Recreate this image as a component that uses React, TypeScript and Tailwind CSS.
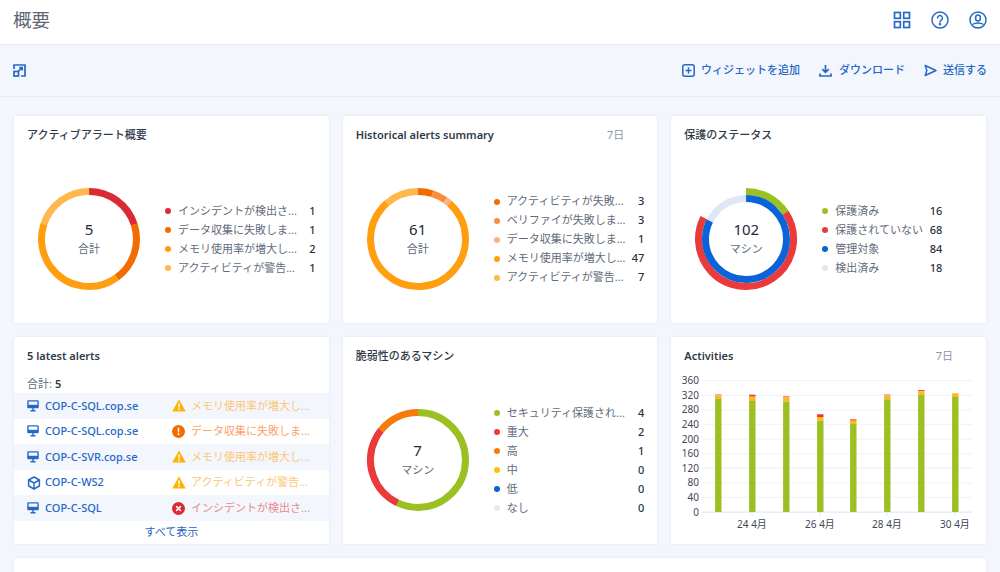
import React from "react";

const blue = "#2668c5";

type Seg = { color: string; from: number; to: number };

function arc(r: number, seg: Seg, width: number) {
  const c = 2 * Math.PI * r;
  const len = ((seg.to - seg.from) / 360) * c;
  return (
    <circle
      key={`${r}-${seg.from}`}
      cx="60"
      cy="60"
      r={r}
      fill="none"
      stroke={seg.color}
      strokeWidth={width}
      strokeDasharray={`${len} ${c - len}`}
      transform={`rotate(${seg.from - 90} 60 60)`}
    />
  );
}

function Donut({
  outer,
  inner,
  value,
  label,
}: {
  outer: Seg[];
  inner?: Seg[];
  value: string;
  label: string;
}) {
  return (
    <div className="relative mr-[16px] h-[120px] w-[120px] shrink-0">
      <svg width="120" height="120" viewBox="0 0 120 120">
        {outer.map((s) => arc(47.5, s, 7))}
        {inner && inner.map((s) => arc(40.5, s, 7))}
      </svg>
      <div className="absolute inset-0 flex flex-col items-center justify-center">
        <div className="text-[15px] leading-[20px] text-[#1f2a3a]">{value}</div>
        <div className="mt-[1px] text-[11px] leading-[18px] text-[#5f6b7a]">{label}</div>
      </div>
    </div>
  );
}

function Legend({ rows }: { rows: { color: string; text: string; n: number }[] }) {
  return (
    <div className="flex-1 pt-[2px]">
      {rows.map((r) => (
        <div key={r.text} className="flex h-[19px] items-center text-[11px]">
          <span className="h-[6px] w-[6px] shrink-0 rounded-full" style={{ background: r.color }} />
          <span className="ml-[7px] flex-1 whitespace-nowrap text-[#5f6b7a]">{r.text}</span>
          <span className="text-[11px] font-medium text-[#2a3442]">{r.n}</span>
        </div>
      ))}
    </div>
  );
}

function Card({
  title,
  range,
  latin,
  children,
}: {
  title: string;
  range?: string;
  latin?: boolean;
  children: React.ReactNode;
}) {
  return (
    <section className="flex h-[207px] flex-col rounded-[2px] bg-white shadow-[0_0_2px_rgba(38,104,197,0.15)]">
      <div className="flex h-[38px] items-center justify-between pl-[13px] pr-[33px] text-[11px] text-[#2f3a48]">
        <span className={latin ? "font-semibold" : "font-medium"}>{title}</span>
        {range && <span className="text-[11px] font-normal text-[#8d96a3]">{range}</span>}
      </div>
      {children}
    </section>
  );
}

function DonutBody({ children }: { children: React.ReactNode }) {
  return <div className="flex flex-1 items-center pl-[15px] pr-[13px]">{children}</div>;
}

function Pc() {
  return (
    <svg width="12" height="12" viewBox="0 0 13 13" fill="none" stroke={blue} strokeWidth="1.5">
      <rect x="1" y="1" width="11" height="7.2" rx="0.6" />
      <path d="M1 6.6h11" strokeWidth="2.8" />
      <path d="M6.5 8v3M3.8 11.6h5.4" />
    </svg>
  );
}

function Box() {
  return (
    <svg width="14" height="14" viewBox="0 0 14 14" fill="none" stroke={blue} strokeWidth="1.5" strokeLinejoin="round">
      <path d="M7 1l5.4 3v6L7 13l-5.4-3V4z" />
      <path d="M1.6 4L7 7l5.4-3M7 7v6" />
    </svg>
  );
}

function Warn() {
  return (
    <svg width="14" height="13" viewBox="0 0 14 13">
      <path d="M7 .6L13.8 12.6H.2z" fill="#ffb300" />
      <path d="M6.2 4.6h1.6l-.2 4.2H6.4zM6.2 9.6h1.6v1.5H6.2z" fill="#fff" />
    </svg>
  );
}

function Err() {
  return (
    <svg width="13" height="13" viewBox="0 0 13 13">
      <circle cx="6.5" cy="6.5" r="6.5" fill="#f36c00" />
      <path d="M5.7 2.8h1.6l-.2 4.6H5.9zM5.7 8.3h1.6v1.6H5.7z" fill="#fff" />
    </svg>
  );
}

function Crit() {
  return (
    <svg width="13" height="13" viewBox="0 0 13 13">
      <circle cx="6.5" cy="6.5" r="6.5" fill="#d92a35" />
      <path d="M4.6 4.6l3.8 3.8M8.4 4.6l-3.8 3.8" stroke="#fff" strokeWidth="1.5" strokeLinecap="round" />
    </svg>
  );
}

const alerts = [
  { name: "COP-C-SQL.cop.se", dev: <Pc />, icon: <Warn />, text: "メモリ使用率が増大し...", color: "#fcc675", bg: "bg-[#f3f6fc]" },
  { name: "COP-C-SQL.cop.se", dev: <Pc />, icon: <Err />, text: "データ収集に失敗しま...", color: "#fba26a", bg: "bg-white" },
  { name: "COP-C-SVR.cop.se", dev: <Pc />, icon: <Warn />, text: "メモリ使用率が増大し...", color: "#fcc675", bg: "bg-[#f3f6fc]" },
  { name: "COP-C-WS2", dev: <Box />, icon: <Warn />, text: "アクティビティが警告...", color: "#fcc675", bg: "bg-white" },
  { name: "COP-C-SQL", dev: <Pc />, icon: <Crit />, text: "インシデントが検出さ...", color: "#ea8a90", bg: "bg-[#f3f6fc]" },
];

// [x, green top, yellow top, cap top, cap colour]
const bars: [number, number, number, number, string][] = [
  [719.3, 398.7, 395.7, 394, "#f7a6a6"],
  [753.3, 401, 396.7, 394.7, "#e8403f"],
  [787.3, 401.7, 397.7, 396, "#f28a80"],
  [821.3, 420.7, 417, 414.3, "#e8353a"],
  [854.3, 424, 421, 419, "#f58a4a"],
  [888.3, 399.3, 395.7, 394, "#f7a6a6"],
  [922.3, 394.7, 391.3, 390, "#e8504a"],
  [956.3, 397, 393.3, 393.3, "#ffb300"],
];

const ticks = [360, 320, 280, 240, 200, 160, 120, 80, 40, 0];
const dates: [number, string][] = [
  [753, "24 4月"],
  [821, "26 4月"],
  [888, "28 4月"],
  [956, "30 4月"],
];

function ActivityChart() {
  return (
    <svg width="314" height="175" viewBox="672 369 314 175" className="-mt-[6px] block">
      {ticks.map((t, i) => {
        const y = 380.7 + i * 14.59;
        return (
          <g key={t}>
            <line x1="703" x2="973" y1={y} y2={y} stroke="#f1f4fa" strokeWidth="1.3" />
            <text x="700" y={y + 3.6} textAnchor="end" fontSize="10" fill="#3f4854">
              {t}
            </text>
          </g>
        );
      })}
      <line x1="703" x2="973" y1="512.3" y2="512.3" stroke="#e6ecf6" strokeWidth="1" />
      {bars.map(([x, g, yl, cap, c]) => (
        <g key={x}>
          <rect x={x - 3.2} y={cap} width="6.4" height={yl - cap} fill={c} />
          <rect x={x - 3.2} y={yl} width="6.4" height={g - yl} fill="#ffb71b" />
          <rect x={x - 3.2} y={g} width="6.4" height={512 - g} fill="#9ac121" />
        </g>
      ))}
      {dates.map(([x, s]) => (
        <g key={s}>
          <line x1={x} x2={x} y1="512" y2="516" stroke="#dfe6f2" />
          <text x={x} y="528" textAnchor="middle" fontSize="10" fill="#3f4854">
            {s}
          </text>
        </g>
      ))}
    </svg>
  );
}

export default function App() {
  return (
    <div className="h-[572px] w-[1000px] overflow-hidden bg-[#f3f6fc] font-['Noto_Sans','Noto_Sans_CJK_JP',sans-serif]">
      {/* Header */}
      <header className="flex h-[45px] items-center justify-between border-b border-[#e6ecf6] bg-white px-[13px] pb-[4px]">
        <h1 className="text-[18.5px] font-normal text-[#5f6773]">概要</h1>
        <div className="flex items-center gap-[20px]">
          <svg width="18" height="18" viewBox="0 0 18 18" fill="none" stroke={blue} strokeWidth="1.7">
            <rect x="1.5" y="1.5" width="5.8" height="5.8" />
            <rect x="10.7" y="1.5" width="5.8" height="5.8" />
            <rect x="1.5" y="10.7" width="5.8" height="5.8" />
            <rect x="10.7" y="10.7" width="5.8" height="5.8" />
          </svg>
          <svg width="18" height="18" viewBox="0 0 18 18" fill="none" stroke={blue} strokeWidth="1.5">
            <circle cx="9" cy="9" r="8" />
            <path d="M6.6 7a2.4 2.4 0 1 1 3.6 2.1c-.8.5-1.2 1-1.2 2" strokeLinecap="round" />
            <circle cx="9" cy="13.3" r="0.5" fill={blue} />
          </svg>
          <svg width="18" height="18" viewBox="0 0 18 18" fill="none" stroke={blue} strokeWidth="1.5">
            <circle cx="9" cy="9" r="8" />
            <ellipse cx="9" cy="7" rx="2.4" ry="3" />
            <path d="M3.5 13.5c1.5-1 3.4-1.4 5.5-1.4s4 .4 5.5 1.4" />
          </svg>
        </div>
      </header>

      {/* Toolbar */}
      <div className="flex h-[52px] items-center justify-between border-b border-[#e6ecf6] px-[13px]">
        <svg width="13" height="13" viewBox="0 0 13 13" fill="none" stroke={blue} strokeWidth="1.7">
          <path d="M1 5V1h11v11H8" />
          <rect x="1" y="7.5" width="4.5" height="4.5" />
          <path d="M5 7.5L9 3.8M6.2 3.6h3v3" />
        </svg>
        <div className="flex items-center text-[11px] font-medium text-[#2668c5]">
          <svg width="13" height="13" viewBox="0 0 13 13" fill="none" stroke={blue} strokeWidth="1.5">
            <rect x="0.8" y="0.8" width="11.4" height="11.4" rx="2" />
            <path d="M6.5 3.5v6M3.5 6.5h6" />
          </svg>
          <span className="ml-[6px]">ウィジェットを追加</span>
          <svg className="ml-[19px]" width="13" height="13" viewBox="0 0 13 13" fill="none" stroke={blue} strokeWidth="1.7">
            <path d="M6.5 1v7M3.3 5.2l3.2 3.2 3.2-3.2M1 9.5v2.5h11V9.5" />
          </svg>
          <span className="ml-[7px]">ダウンロード</span>
          <svg className="ml-[19px]" width="13" height="13" viewBox="0 0 13 13" fill="none" stroke={blue} strokeWidth="1.5" strokeLinejoin="round">
            <path d="M1.2 1.5L12 6.5 1.2 11.5l1.6-5z" />
          </svg>
          <span className="ml-[6px]">送信する</span>
        </div>
      </div>

      {/* Widgets */}
      <main className="grid grid-cols-3 gap-[14px] px-[14px] pt-[19px]">
        <Card title="アクティブアラート概要">
          <DonutBody>
            <Donut
              value="5"
              label="合計"
              outer={[
                { color: "#d92a35", from: 0, to: 72 },
                { color: "#f36c00", from: 72, to: 144 },
                { color: "#ff9f0f", from: 144, to: 288 },
                { color: "#ffb84d", from: 288, to: 360 },
              ]}
            />
            <Legend
              rows={[
                { color: "#d92a35", text: "インシデントが検出さ...", n: 1 },
                { color: "#f36c00", text: "データ収集に失敗しま...", n: 1 },
                { color: "#ff9f0f", text: "メモリ使用率が増大し...", n: 2 },
                { color: "#ffb84d", text: "アクティビティが警告...", n: 1 },
              ]}
            />
          </DonutBody>
        </Card>

        <Card title="Historical alerts summary" range="7日" latin>
          <DonutBody>
            <Donut
              value="61"
              label="合計"
              outer={[
                { color: "#f36c00", from: 0, to: 17.7 },
                { color: "#fb8c3c", from: 17.7, to: 35.4 },
                { color: "#fdb183", from: 35.4, to: 41.3 },
                { color: "#ff9f0f", from: 41.3, to: 318.7 },
                { color: "#ffb84d", from: 318.7, to: 360 },
              ]}
            />
            <Legend
              rows={[
                { color: "#f36c00", text: "アクティビティが失敗...", n: 3 },
                { color: "#fb8c3c", text: "ベリファイが失敗しま...", n: 3 },
                { color: "#fdb183", text: "データ収集に失敗しま...", n: 1 },
                { color: "#ff9f0f", text: "メモリ使用率が増大し...", n: 47 },
                { color: "#ffb84d", text: "アクティビティが警告...", n: 7 },
              ]}
            />
          </DonutBody>
        </Card>

        <Card title="保護のステータス">
          <DonutBody>
            <Donut
              value="102"
              label="マシン"
              outer={[
                { color: "#9ac121", from: 0, to: 56.5 },
                { color: "#ea3a3a", from: 56.5, to: 296.5 },
              ]}
              inner={[
                { color: "#0a63d8", from: 0, to: 296.5 },
                { color: "#dfe7f4", from: 296.5, to: 360 },
              ]}
            />
            <div className="w-[120px]">
              <Legend
                rows={[
                  { color: "#9ac121", text: "保護済み", n: 16 },
                  { color: "#ea3a3a", text: "保護されていない", n: 68 },
                  { color: "#0a63d8", text: "管理対象", n: 84 },
                  { color: "#dfe7f4", text: "検出済み", n: 18 },
                ]}
              />
            </div>
          </DonutBody>
        </Card>

        <Card title="5 latest alerts" latin>
          <div className="flex flex-1 flex-col">
            <div className="flex h-[18px] items-center pl-[13px] pt-[1px] text-[11px] text-[#5f6b7a]">
              合計:<span className="ml-[3px] font-semibold text-[#2f3a48]">5</span>
            </div>
            {alerts.map((a, i) => (
              <div key={i} className={`flex h-[25.6px] items-center pl-[13px] ${a.bg}`}>
                <span className="flex w-[18px] shrink-0 items-center">{a.dev}</span>
                <span className="w-[127px] shrink-0 text-[11px] font-medium text-[#2668c5]">{a.name}</span>
                <span className="flex w-[19px] shrink-0 items-center">{a.icon}</span>
                <span className="whitespace-nowrap text-[11px]" style={{ color: a.color }}>
                  {a.text}
                </span>
              </div>
            ))}
            <div className="flex flex-1 items-center justify-center text-[11px] text-[#2668c5]">すべて表示</div>
          </div>
        </Card>

        <Card title="脆弱性のあるマシン">
          <DonutBody>
            <Donut
              value="7"
              label="マシン"
              outer={[
                { color: "#9ac121", from: 0, to: 205.7 },
                { color: "#ea3a3a", from: 205.7, to: 308.6 },
                { color: "#f57c0a", from: 308.6, to: 360 },
              ]}
            />
            <Legend
              rows={[
                { color: "#9ac121", text: "セキュリティ保護され...", n: 4 },
                { color: "#ea3a3a", text: "重大", n: 2 },
                { color: "#f57c0a", text: "高", n: 1 },
                { color: "#ffc107", text: "中", n: 0 },
                { color: "#0a63d8", text: "低", n: 0 },
                { color: "#e3eaf7", text: "なし", n: 0 },
              ]}
            />
          </DonutBody>
        </Card>

        <Card title="Activities" range="7日" latin>
          <ActivityChart />
        </Card>

        <section className="col-span-3 h-[40px] rounded-[2px] bg-white shadow-[0_0_2px_rgba(38,104,197,0.15)]" />
      </main>
    </div>
  );
}
